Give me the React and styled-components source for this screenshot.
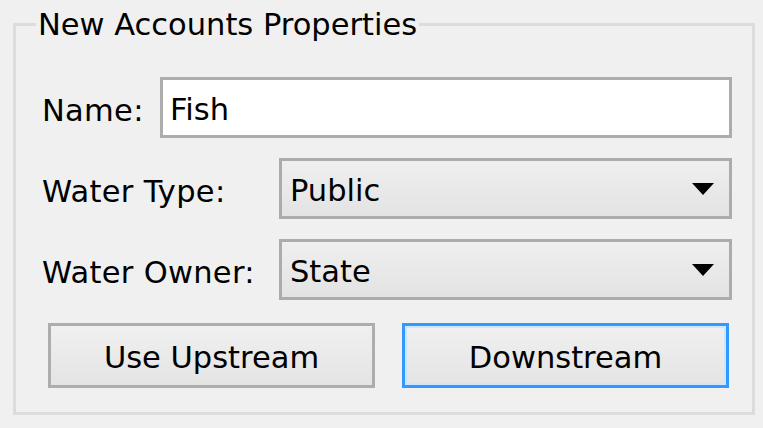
import styled, { createGlobalStyle } from "styled-components";

const GlobalStyle = createGlobalStyle`
  html, body {
    margin: 0;
    padding: 0;
    background: #f0f0f0;
  }
  body {
    font-family: "DejaVu Sans", "Liberation Sans", sans-serif;
    color: #000;
  }
`;

const Page = styled.main`
  width: 763px;
  height: 428px;
  box-sizing: border-box;
  padding: 7px 8px 0 13px;
`;

const GroupBox = styled.fieldset`
  margin: 0;
  padding: 0 20px 24px 26px;
  width: 742px;
  box-sizing: border-box;
  border: 3px solid #dcdcdc;
  min-inline-size: 0;
`;

const Legend = styled.legend`
  margin-left: -6px;
  padding: 0 2px;
  font-size: 30.5px;
  line-height: 35px;
`;

const Form = styled.div`
  display: flex;
  flex-direction: column;
  padding-top: 35px;
`;

const Row = styled.div`
  display: grid;
  grid-template-columns: ${(p) => p.$labelWidth}px 1fr;
  align-items: center;
  margin-bottom: ${(p) => p.$gap}px;
`;

const Label = styled.label`
  font-size: 30.5px;
  padding-top: 5px;
  letter-spacing: 0.3px;
`;

const TextBox = styled.div`
  height: 61px;
  box-sizing: border-box;
  border: 3px solid #adadad;
  background: #fff;
  display: flex;
  align-items: center;
  padding: 4px 0 0 7px;
  font-size: 30.5px;
`;

const Combo = styled.div`
  height: 61px;
  box-sizing: border-box;
  border: 3px solid #acacac;
  background: linear-gradient(#efefef, #e3e3e3);
  display: flex;
  align-items: center;
  justify-content: space-between;
  padding: 0 15px 0 8px;
  font-size: 30.5px;
`;

const ComboText = styled.span`
  padding-top: 4px;
`;

const Arrow = styled.svg`
  width: 22px;
  height: 12px;
`;

const ButtonRow = styled.div`
  display: flex;
  gap: 27px;
  padding: 0 3px 0 6px;
`;

const Button = styled.button`
  flex: 1;
  height: 65px;
  box-sizing: border-box;
  border: 3px solid ${(p) => (p.$focused ? "#3399ff" : "#adadad")};
  box-shadow: ${(p) => (p.$focused ? "inset 0 0 0 2px #cce6ff" : "none")};
  background: linear-gradient(#f0f0f0, #e4e4e4);
  font-family: "DejaVu Sans", "Liberation Sans", sans-serif;
  font-size: 30.5px;
  color: #000;
  padding: 4px 0 0;
`;

const ComboField = ({ value }) => (
  <Combo>
    <ComboText>{value}</ComboText>
    <Arrow viewBox="0 0 22 12">
      <path d="M0 0H22L11 12Z" fill="#000" />
    </Arrow>
  </Combo>
);

export default function App() {
  return (
    <>
      <GlobalStyle />
      <Page>
        <GroupBox>
          <Legend>New Accounts Properties</Legend>
          <Form>
            <Row $labelWidth={118} $gap={20}>
              <Label>Name:</Label>
              <TextBox>Fish</TextBox>
            </Row>
            <Row $labelWidth={237} $gap={20}>
              <Label>Water Type:</Label>
              <ComboField value="Public" />
            </Row>
            <Row $labelWidth={237} $gap={23}>
              <Label>Water Owner:</Label>
              <ComboField value="State" />
            </Row>
            <ButtonRow>
              <Button>Use Upstream</Button>
              <Button $focused>Downstream</Button>
            </ButtonRow>
          </Form>
        </GroupBox>
      </Page>
    </>
  );
}
